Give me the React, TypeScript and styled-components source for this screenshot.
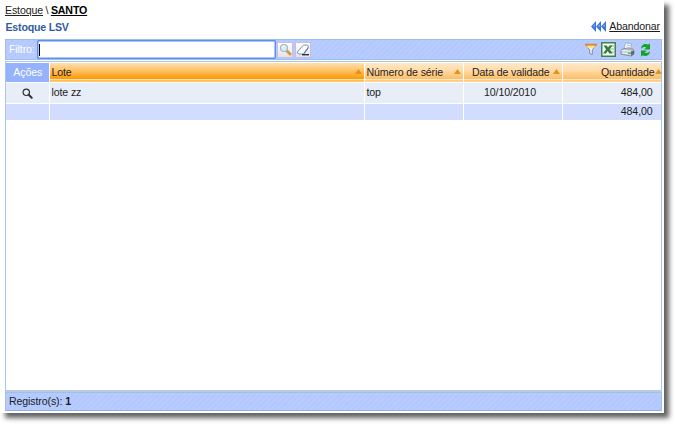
import React from "react";
import styled, { createGlobalStyle, css } from "styled-components";

const Global = createGlobalStyle`
  * { box-sizing: border-box; }
  body { margin: 0; height: 424px; background: #fff; overflow: hidden; font: 10.6px/14px "Liberation Sans", Arial, sans-serif; letter-spacing: -0.12px; color: #1c1c1c; }
`;

const stripes = css`
  background: repeating-linear-gradient(135deg, #b2c8ff 0 2px, #b8ccff 2px 4px);
`;

const Window = styled.main`
  width: 664px;
  height: 413px;
  padding: 3px 2px 2px 5px;
  display: flex;
  flex-direction: column;
  background: #fff;
  box-shadow: 5px 5px 5px rgba(0, 0, 0, 0.62);
`;

const Breadcrumb = styled.nav`
  height: 16px;
  display: flex;
  gap: 2.5px;
  white-space: pre;
`;

const Crumb = styled.a<{ $current?: boolean }>`
  color: ${(p) => (p.$current ? "#000" : "#222")};
  font-weight: ${(p) => (p.$current ? 700 : 400)};
  text-decoration: underline;
  text-underline-offset: 1px;
`;

const TitleRow = styled.header`
  height: 20px;
  display: flex;
  justify-content: space-between;
  align-items: flex-start;
`;

const Title = styled.h1`
  margin: 1px 0 0 0.5px;
  font-size: 10.6px;
  line-height: 14px;
  letter-spacing: -0.2px;
  color: #345a9f;
`;

const BackLink = styled.a`
  display: flex;
  gap: 3px;
  align-items: center;
  margin-right: 2px;
  text-decoration: underline;
  text-underline-offset: 1px;
`;

const Toolbar = styled.div`
  height: 21px;
  flex: none;
  display: flex;
  align-items: center;
  border: 1px solid #9fbfe8;
  ${stripes}
`;

const FilterLabel = styled.label`
  width: 31px;
  padding-left: 3px;
  margin-top: -1px;
  color: #fff;
`;

const FilterInput = styled.div`
  width: 239px;
  height: 19px;
  padding: 3px 1px;
  background: #fff;
  border: 1px solid #5b8ff0;
  box-shadow: inset 0 0 0 0.5px #5b8ff0;
  border-radius: 1px;
`;

const Caret = styled.span`
  display: block;
  width: 1px;
  height: 12px;
  background: #000;
`;

const ToolButton = styled.button`
  width: 16px;
  height: 16px;
  margin-left: 1px;
  margin-right: 1px;
  padding: 0;
  display: grid;
  place-items: center;
  border: 1px solid #c6bfde;
  background: linear-gradient(#fff, #e4e2ea);
`;

const ToolIcons = styled.div`
  margin-left: auto;
  margin-right: 9px;
  display: flex;
  align-items: center;
  gap: 4px;
`;

const Grid = styled.section`
  flex: 1;
  margin-top: 1px;
  display: flex;
  flex-direction: column;
  border: 1px solid #a9c6e4;
  border-bottom: 2px solid #b9cbdc;
  padding-top: 1px;
`;

const columns = css`
  display: grid;
  grid-template-columns: 43px 314px 98px 98px 98px;
  column-gap: 1px;
`;

const HeadRow = styled.div`
  ${columns}
  height: 20px;
`;

const HeadCell = styled.div<{ $kind?: "actions" | "sorted"; $align?: string; $pad?: string }>`
  display: flex;
  align-items: center;
  justify-content: ${(p) => p.$align ?? "flex-start"};
  height: 19px;
  padding: ${(p) => p.$pad ?? "0 1px 1px 1.5px"};
  color: ${(p) => (p.$kind === "actions" ? "#fff" : "#2a2418")};
  background: ${(p) =>
    p.$kind === "actions"
      ? "#95b3fd"
      : p.$kind === "sorted"
        ? "linear-gradient(#ffdfb0 0, #ffc46b 7px, #ff9c0a 15px, #ff9c0a 16px, #ffe2b4 16px, #ffe2b4 17px, #ffb84f 17px, #ffc970 19px)"
        : "linear-gradient(#ffe8c8 0, #ffdcac 7px, #ffbd64 16px, #ffe9cc 16px, #ffe9cc 17px, #ffc87c 17px, #ffd597 19px)"};
`;

const SortMark = styled.svg`
  width: 7px;
  height: 5px;
  flex: none;
  margin-left: auto;
  margin-bottom: 1px;
  fill: #df951c;
`;

const Row = styled.div<{ $total?: boolean }>`
  ${columns}
  height: ${(p) => (p.$total ? 16 : 20)}px;
  margin-bottom: ${(p) => (p.$total ? 0 : 1)}px;
  line-height: ${(p) => (p.$total ? 14 : 18)}px;
  > * { background: ${(p) => (p.$total ? "#d1dcff" : "#e7eef8")}; }
`;

const Cell = styled.div<{ $align?: "center" | "right" }>`
  text-align: ${(p) => p.$align ?? "left"};
  padding: ${(p) => (p.$align === "right" ? "0 8.5px 0 0" : p.$align === "center" ? "0 6px 0 0" : "0 1.5px")};
`;

const ActionCell = styled.div`
  display: grid;
  place-items: center;
`;

const Footer = styled.footer`
  height: 19px;
  flex: none;
  padding-left: 3px;
  line-height: 16px;
  border: 1px solid #9fbfec;
  border-bottom-color: #8eb0e6;
  ${stripes}
`;

const Sort = () => <SortMark viewBox="0 0 7 5"><path d="M3.5 0L7 5H0Z" /></SortMark>;

const Rewind = () => (
  <svg width="15" height="11" viewBox="0 0 15 10" preserveAspectRatio="none">
    <path d="M5 0V10L0 5ZM10 0V10L5 5ZM15 0V10L10 5Z" fill="#3c74dc" />
    <path d="M4 3V5H1.5ZM9 3V5H6.5ZM14 3V5H11.5Z" fill="#86b3f5" />
  </svg>
);

const Search = () => (
  <svg width="13" height="13" viewBox="0 0 13 13">
    <path d="M7.5 7.5L11 11" stroke="#d79a40" strokeWidth="3" strokeLinecap="round" />
    <circle cx="5" cy="5" r="3.5" fill="#d7edfa" stroke="#a8b5c4" strokeWidth="1.2" />
    <path d="M3 5Q3 3 5 3" stroke="#fff" fill="none" />
  </svg>
);

const Eraser = () => (
  <svg width="14" height="14" viewBox="0 0 14 14">
    <path d="M1.5 9L6.5 3Q7.5 2 9 2H11Q13 2.5 12.3 4.5L7.5 11H3Q1 10.5 1.5 9Z" fill="#f7fbff" stroke="#8295b5" />
    <path d="M8 10.5L12.3 4.5" stroke="#60779c" strokeWidth="1.2" />
    <path d="M6 11.7H13" stroke="#2c3440" strokeWidth="1.4" />
  </svg>
);

const Funnel = () => (
  <svg width="12" height="13" viewBox="0 0 12 13">
    <path d="M1 2H11L7.3 7V11.5L4.7 10.5V7Z" fill="#eef2f8" stroke="#858ca0" />
    <path d="M1.5 3.2H10.5L9.5 4.8H2.5Z" fill="#ffe252" />
    <path d="M0 1.5H12" stroke="#f08320" strokeWidth="1.6" />
  </svg>
);

const Excel = () => (
  <svg width="15" height="15" viewBox="0 0 15 15">
    <rect x=".75" y=".75" width="13.5" height="13.5" fill="#f4faef" stroke="#448052" strokeWidth="1.5" />
    <path d="M9 4H13M9 7H13M9 10H13" stroke="#8ebc8e" />
    <path d="M2.5 3.5H5.8L7 5.6L8.5 3.5H11.5L8.6 7.2L11.7 11.5H8.3L6.7 9L5 11.5H2L5.1 7.3Z" fill="#347a42" />
  </svg>
);

const Printer = () => (
  <svg width="15" height="15" viewBox="0 0 15 15">
    <path d="M4 7.5L5.5 .8L11.5 1.8L10.5 8Z" fill="#fafdff" stroke="#9ba5b2" strokeWidth=".8" />
    <path d="M6.8 3L10.5 3.7M6.2 5L10 5.7" stroke="#9dabc0" strokeWidth=".8" />
    <path d="M1 8.2L4 6.5L13 7L14 9V12L11.5 14L1 12.2Z" fill="#c4cad4" stroke="#77808e" strokeWidth=".8" />
    <path d="M1.5 8.5L10.5 9.3M2 11L10.5 12" stroke="#f4f6fa" fill="none" />
    <path d="M11 9.5V14L14 12V8.5Z" fill="#5f6975" />
    <path d="M8 11.2H10.8" stroke="#38ce4a" strokeWidth="1.5" />
  </svg>
);

const Refresh = () => (
  <svg width="13" height="14" viewBox="0 0 13 13" preserveAspectRatio="none" fill="#13a522">
    <path d="M2 5.5C2 2.5 4.3 .5 7.5 1L9 1.6L11 .4V6H5.3L7.2 4C5.5 3.3 3.5 3.8 2 5.5Z" />
    <path d="M11 7.5C11 10.5 8.7 12.5 5.5 12L4 11.4L2 12.6V7H7.7L5.8 9C7.5 9.7 9.5 9.2 11 7.5Z" />
  </svg>
);

const RowSearch = () => (
  <svg width="11" height="11" viewBox="0 0 11 11" fill="none" stroke="#333">
    <circle cx="4.3" cy="4.3" r="3.2" strokeWidth="1.2" />
    <path d="M6.7 6.7L9.7 9.7" strokeWidth="2" strokeLinecap="round" />
  </svg>
);

export default function App() {
  return (
    <>
      <Global />
      <Window>
        <Breadcrumb><Crumb>Estoque</Crumb><span>\</span><Crumb $current>SANTO</Crumb></Breadcrumb>
        <TitleRow>
          <Title>Estoque LSV</Title>
          <BackLink><Rewind />Abandonar</BackLink>
        </TitleRow>
        <Toolbar>
          <FilterLabel>Filtro:</FilterLabel>
          <FilterInput><Caret /></FilterInput>
          <ToolButton><Search /></ToolButton>
          <ToolButton><Eraser /></ToolButton>
          <ToolIcons><Funnel /><Excel /><Printer /><Refresh /></ToolIcons>
        </Toolbar>
        <Grid>
          <HeadRow>
            <HeadCell $kind="actions" $align="center">Ações</HeadCell>
            <HeadCell $kind="sorted" $pad="0 2px 1px 1.5px">Lote<Sort /></HeadCell>
            <HeadCell $pad="0 2px 1px 1.5px">Número de série<Sort /></HeadCell>
            <HeadCell $pad="0 2px 1px 8px">Data de validade<Sort /></HeadCell>
            <HeadCell $pad="0 1px 1px 38px">Quantidade<Sort /></HeadCell>
          </HeadRow>
          <Row>
            <ActionCell><RowSearch /></ActionCell>
            <Cell>lote zz</Cell>
            <Cell>top</Cell>
            <Cell $align="center">10/10/2010</Cell>
            <Cell $align="right">484,00</Cell>
          </Row>
          <Row $total>
            <Cell /><Cell /><Cell /><Cell />
            <Cell $align="right">484,00</Cell>
          </Row>
        </Grid>
        <Footer>Registro(s): <b>1</b></Footer>
      </Window>
    </>
  );
}
